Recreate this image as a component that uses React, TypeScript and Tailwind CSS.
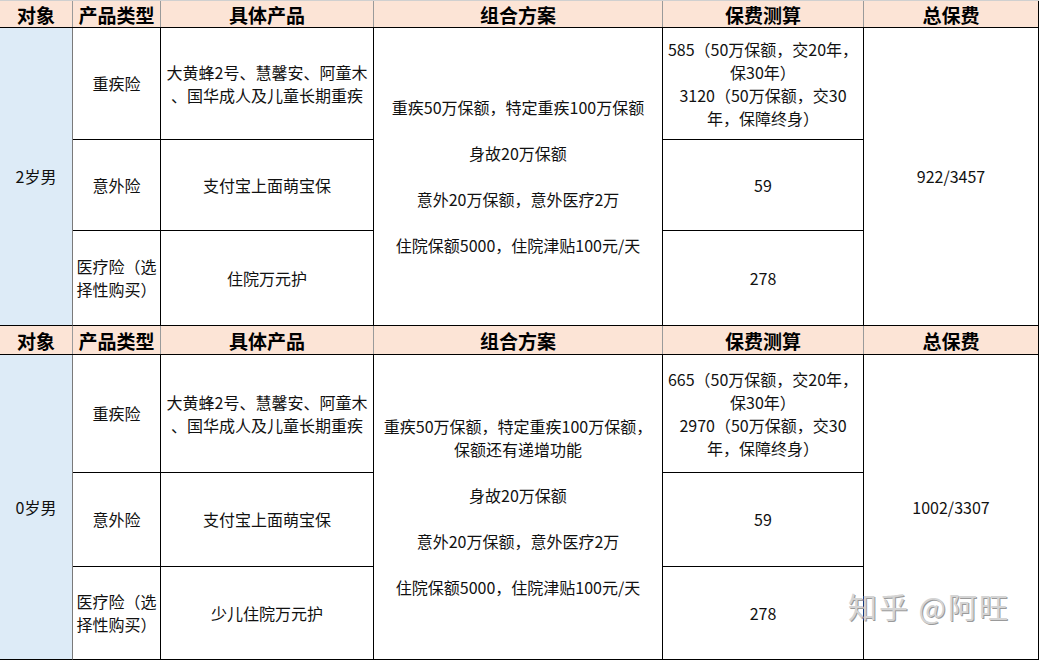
import React from 'react'

type Section = {
  who: string
  rowHeights: [string, string, string]
  plan: string[][]
  criticalFee: string[]
  medical: string
  total: string
}

const sections: Section[] = [
  {
    who: '2岁男',
    rowHeights: ['h-[112px]', 'h-[91px]', 'h-[95px]'],
    plan: [['重疾50万保额，特定重疾100万保额'], ['身故20万保额'], ['意外20万保额，意外医疗2万'], ['住院保额5000，住院津贴100元/天']],
    criticalFee: ['585（50万保额，交20年，', '保30年）', '3120（50万保额，交30', '年，保障终身）'],
    medical: '住院万元护',
    total: '922/3457',
  },
  {
    who: '0岁男',
    rowHeights: ['h-[118px]', 'h-[94px]', 'h-[93px]'],
    plan: [
      ['重疾50万保额，特定重疾100万保额，', '保额还有递增功能'],
      ['身故20万保额'],
      ['意外20万保额，意外医疗2万'],
      ['住院保额5000，住院津贴100元/天'],
    ],
    criticalFee: ['665（50万保额，交20年，', '保30年）', '2970（50万保额，交30', '年，保障终身）'],
    medical: '少儿住院万元护',
    total: '1002/3307',
  },
]

const headers = ['对象', '产品类型', '具体产品', '组合方案', '保费测算', '总保费']
const widths = ['w-[73px]', 'w-[88px]', 'w-[213px]', 'w-[289px]', 'w-[201px]', 'w-[175px]']

function HeaderRow({ first }: { first?: boolean }) {
  return (
    <div
      className={`flex bg-[#fce4d6] border-b border-black ${first ? 'h-[28px] border-t border-t-[#d0d0d0]' : 'h-[29px]'}`}
    >
      {headers.map((h, i) => (
        <div
          key={h}
          className={`${widths[i]} shrink-0 flex items-center justify-center font-bold text-[19px] text-black border-r ${
            i === headers.length - 1 ? 'border-r-black' : 'border-r-[#9a9a9a]'
          }`}
        >
          {h}
        </div>
      ))}
    </div>
  )
}

function Cell({ className, children }: { className?: string; children: React.ReactNode }) {
  return (
    <div className={`flex items-center justify-center text-center border-b border-black ${className ?? ''}`}>
      {children}
    </div>
  )
}

function Lines({ lines }: { lines: string[] }) {
  return (
    <div className="flex flex-col items-center">
      {lines.map((l) => (
        <span key={l} className="whitespace-nowrap">
          {l}
        </span>
      ))}
    </div>
  )
}

function Body({ s }: { s: Section }) {
  return (
    <div className="flex">
      <Cell className={`${widths[0]} shrink-0 bg-[#ddebf7] border-r border-r-[#7a7a7a]`}>{s.who}</Cell>
      <div className="flex flex-col shrink-0">
        <div className={`flex ${s.rowHeights[0]}`}>
          <Cell className={`${widths[1]} border-r border-r-black`}>重疾险</Cell>
          <Cell className={`${widths[2]} border-r border-r-black`}>
            <Lines lines={['大黄蜂2号、慧馨安、阿童木', '、国华成人及儿童长期重疾']} />
          </Cell>
        </div>
        <div className={`flex ${s.rowHeights[1]}`}>
          <Cell className={`${widths[1]} border-r border-r-black`}>意外险</Cell>
          <Cell className={`${widths[2]} border-r border-r-black`}>支付宝上面萌宝保</Cell>
        </div>
        <div className={`flex ${s.rowHeights[2]}`}>
          <Cell className={`${widths[1]} border-r border-r-black`}>
            <Lines lines={['医疗险（选', '择性购买）']} />
          </Cell>
          <Cell className={`${widths[2]} border-r border-r-black`}>{s.medical}</Cell>
        </div>
      </div>
      <Cell className={`${widths[3]} shrink-0 border-r border-r-black`}>
        <div className="flex flex-col items-center gap-[23px]">
          {s.plan.map((p) => (
            <Lines key={p[0]} lines={p} />
          ))}
        </div>
      </Cell>
      <div className="flex flex-col shrink-0">
        <Cell className={`${widths[4]} ${s.rowHeights[0]} border-r border-r-black`}>
          <Lines lines={s.criticalFee} />
        </Cell>
        <Cell className={`${widths[4]} ${s.rowHeights[1]} border-r border-r-black`}>59</Cell>
        <Cell className={`${widths[4]} ${s.rowHeights[2]} border-r border-r-black`}>278</Cell>
      </div>
      <Cell className={`${widths[5]} shrink-0 border-r border-r-black`}>{s.total}</Cell>
    </div>
  )
}

export default function App() {
  return (
    <div
      className="relative w-[1039px] h-[661px] bg-white overflow-hidden text-[16px] leading-[23px] text-[#111]"
      style={{ fontFamily: '"Noto Sans CJK SC", "Liberation Sans", sans-serif' }}
    >
      <HeaderRow first />
      <Body s={sections[0]} />
      <HeaderRow />
      <Body s={sections[1]} />
      <div
        className="absolute left-[848px] top-[595px] text-[29px] tracking-[2px] text-[#d4d4d4]"
        style={{ textShadow: '1px 1px 0 #9a9a9a' }}
      >
        知乎 @阿旺
      </div>
    </div>
  )
}
